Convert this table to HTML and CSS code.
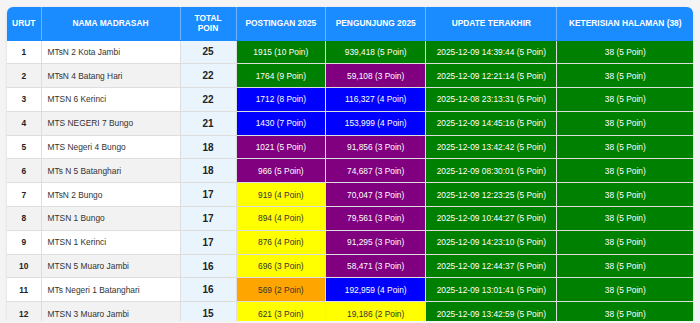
FILE: index.html
```html
<!DOCTYPE html>
<html lang="id">
<head>
<meta charset="utf-8">
<title>Peringkat Madrasah</title>
<link rel="stylesheet" href="styles.css">
</head>
<body>
<div class="wrap">
  <table class="rank">
    <colgroup>
      <col class="c-urut"><col class="c-nama"><col class="c-total"><col class="c-post"><col class="c-peng"><col class="c-upd"><col class="c-ket">
    </colgroup>
    <thead>
      <tr>
        <th>URUT</th><th>NAMA MADRASAH</th><th>TOTAL<br>POIN</th><th>POSTINGAN 2025</th><th>PENGUNJUNG 2025</th><th>UPDATE TERAKHIR</th><th>KETERISIAN HALAMAN (38)</th>
      </tr>
    </thead>
    <tbody>
      <tr><td class="no">1</td><td class="name">MTsN 2 Kota Jambi</td><td class="total">25</td><td class="g">1915 (10 Poin)</td><td class="g">939,418 (5 Poin)</td><td class="g">2025-12-09 14:39:44 (5 Poin)</td><td class="g">38 (5 Poin)</td></tr>
      <tr><td class="no">2</td><td class="name">MTsN 4 Batang Hari</td><td class="total">22</td><td class="g">1764 (9 Poin)</td><td class="p">59,108 (3 Poin)</td><td class="g">2025-12-09 12:21:14 (5 Poin)</td><td class="g">38 (5 Poin)</td></tr>
      <tr><td class="no">3</td><td class="name">MTSN 6 Kerinci</td><td class="total">22</td><td class="b">1712 (8 Poin)</td><td class="b">116,327 (4 Poin)</td><td class="g">2025-12-08 23:13:31 (5 Poin)</td><td class="g">38 (5 Poin)</td></tr>
      <tr><td class="no">4</td><td class="name">MTS NEGERI 7 Bungo</td><td class="total">21</td><td class="b">1430 (7 Poin)</td><td class="b">153,999 (4 Poin)</td><td class="g">2025-12-09 14:45:16 (5 Poin)</td><td class="g">38 (5 Poin)</td></tr>
      <tr><td class="no">5</td><td class="name">MTS Negeri 4 Bungo</td><td class="total">18</td><td class="p">1021 (5 Poin)</td><td class="p">91,856 (3 Poin)</td><td class="g">2025-12-09 13:42:42 (5 Poin)</td><td class="g">38 (5 Poin)</td></tr>
      <tr><td class="no">6</td><td class="name">MTs N 5 Batanghari</td><td class="total">18</td><td class="p">966 (5 Poin)</td><td class="p">74,687 (3 Poin)</td><td class="g">2025-12-09 08:30:01 (5 Poin)</td><td class="g">38 (5 Poin)</td></tr>
      <tr><td class="no">7</td><td class="name">MTsN 2 Bungo</td><td class="total">17</td><td class="y">919 (4 Poin)</td><td class="p">70,047 (3 Poin)</td><td class="g">2025-12-09 12:23:25 (5 Poin)</td><td class="g">38 (5 Poin)</td></tr>
      <tr><td class="no">8</td><td class="name">MTSN 1 Bungo</td><td class="total">17</td><td class="y">894 (4 Poin)</td><td class="p">79,561 (3 Poin)</td><td class="g">2025-12-09 10:44:27 (5 Poin)</td><td class="g">38 (5 Poin)</td></tr>
      <tr><td class="no">9</td><td class="name">MTSN 1 Kerinci</td><td class="total">17</td><td class="y">876 (4 Poin)</td><td class="p">91,295 (3 Poin)</td><td class="g">2025-12-09 14:23:10 (5 Poin)</td><td class="g">38 (5 Poin)</td></tr>
      <tr><td class="no">10</td><td class="name">MTSN 5 Muaro Jambi</td><td class="total">16</td><td class="y">696 (3 Poin)</td><td class="p">58,471 (3 Poin)</td><td class="g">2025-12-09 12:44:37 (5 Poin)</td><td class="g">38 (5 Poin)</td></tr>
      <tr><td class="no">11</td><td class="name">MTs Negeri 1 Batanghari</td><td class="total">16</td><td class="o">569 (2 Poin)</td><td class="b">192,959 (4 Poin)</td><td class="g">2025-12-09 13:01:41 (5 Poin)</td><td class="g">38 (5 Poin)</td></tr>
      <tr><td class="no">12</td><td class="name">MTSN 3 Muaro Jambi</td><td class="total">15</td><td class="y">621 (3 Poin)</td><td class="y">19,186 (2 Poin)</td><td class="g">2025-12-09 13:42:59 (5 Poin)</td><td class="g">38 (5 Poin)</td></tr>
    </tbody>
  </table>
</div>
</body>
</html>
```
FILE: styles.css
```css
html, body {
  margin: 0;
  padding: 0;
  background: #f4f4f4;
}
body {
  padding: 7px 7px 0 7px;
  font-family: "Liberation Sans", Arial, sans-serif;
  color: #333;
}
.wrap {
  height: 313.5px;
  overflow: hidden;
  border-radius: 6px 6px 0 0;
  background: #fff;
  box-shadow: 0 1px 3px rgba(0,0,0,0.12);
}
.rank {
  width: 686px;
  table-layout: fixed;
  border-collapse: collapse;
  font-size: 8.4px;
}
.c-urut { width: 34px; }
.c-nama { width: 139px; }
.c-total { width: 56px; }
.c-post { width: 89.7px; }
.c-peng { width: 100px; }
.c-upd { width: 131.3px; }
.c-ket { width: 136px; }

.rank th {
  background: #1a8cff;
  color: #fff;
  font-weight: bold;
  font-size: 8.4px;
  line-height: 10.5px;
  height: 33px;
  padding: 0 4px;
  text-align: center;
  border-left: 1px solid #6cb4ff;
  border-bottom: 1px solid #1a8cff;
  box-sizing: border-box;
}
.rank th:first-child { border-left: none; }

.rank td {
  height: 23.8px;
  padding: 0 4px;
  text-align: center;
  border: 1px solid #dedede;
  box-sizing: border-box;
  white-space: nowrap;
}
.rank td:first-child { border-left: none; }
.rank td:last-child { border-right: none; }
.rank tbody tr:nth-child(even) td { background: #f2f2f2; }

.rank td.no { font-weight: bold; color: #222; }
.rank td.name { text-align: left; padding-left: 6px; color: #333; }
.rank tbody tr td.total {
  background: #eaf4fd;
  font-weight: bold;
  font-size: 10px;
  color: #222;
}
.rank tbody tr td.g { background: #008000; color: #fff; }
.rank tbody tr td.p { background: #800080; color: #fff; }
.rank tbody tr td.b { background: #0000ff; color: #fff; }
.rank tbody tr td.y { background: #ffff00; color: #333; }
.rank tbody tr td.o { background: #ffa500; color: #333; }
```
